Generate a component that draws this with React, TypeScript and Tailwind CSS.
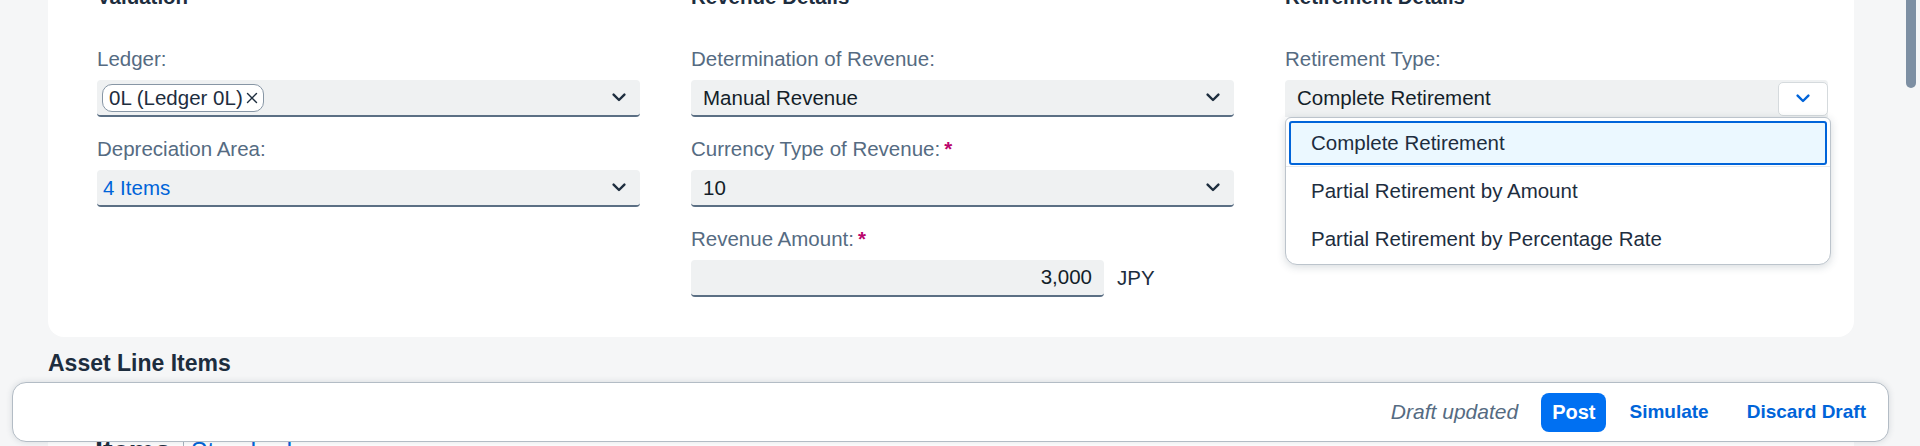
import React from "react";

const Chevron = ({ color = "#1d2d3e", w = 14 }: { color?: string; w?: number }) => (
  <svg width={w} height="9" viewBox="0 0 14 9" fill="none">
    <path d="M1.6 1.6 L7 7 L12.4 1.6" stroke={color} strokeWidth="2.4" strokeLinecap="round" strokeLinejoin="round" />
  </svg>
);

const Close = () => (
  <svg width="12" height="12" viewBox="0 0 12 12" fill="none">
    <path d="M1.5 1.5 L10.5 10.5 M10.5 1.5 L1.5 10.5" stroke="#1d2d3e" strokeWidth="1.4" strokeLinecap="round" />
  </svg>
);

const Label = ({ text, required }: { text: string; required?: boolean }) => (
  <div className="h-[24px] leading-[24px] text-[20.5px] text-[#556b82] flex items-center whitespace-nowrap">
    <span>{text}</span>
    {required && <span className="ml-[4px] font-bold text-[#ba066c]">*</span>}
  </div>
);

const Select = ({ children, pl = "pl-[12px]" }: { children: React.ReactNode; pl?: string }) => (
  <div className={`mt-[9px] h-[37px] bg-[#eff1f2] rounded-[4px] border-b-2 border-[#5b6f84] flex items-center justify-between ${pl} pr-[14px]`}>
    <div className="flex items-center text-[20.5px] text-[#131e29] leading-[35px] whitespace-nowrap">{children}</div>
    <Chevron />
  </div>
);

const Heading = ({ text }: { text: string }) => (
  <div className="h-[24px] leading-[24px] text-[20.5px] font-bold text-[#1d2d3e] whitespace-nowrap">{text}</div>
);

export default function App() {
  return (
    <div className="w-[1920px] h-[446px] overflow-hidden bg-[#f5f6f7] flex font-['Liberation_Sans',Arial,sans-serif]">
      <div className="w-[1902px] relative">
        {/* Form card */}
        <div className="-mt-[40px] ml-[48px] w-[1806px] bg-white rounded-[16px] pt-[25px] pb-[40px] pl-[49px] pr-[26px] flex gap-[51px]">
          {/* Valuation */}
          <div className="w-[543px] flex flex-col">
            <Heading text="Valuation" />
            <div className="mt-[38px] flex flex-col gap-[20px]">
              <div>
                <Label text="Ledger:" />
                <Select pl="pl-[5px]">
                  <span className="inline-flex items-center h-[28px] rounded-[10px] border border-[#8796a5] bg-white pl-[6px] pr-[5px] gap-[3px] text-[20.5px] leading-[26px] text-[#1d2d3e]">
                    0L (Ledger 0L)
                    <Close />
                  </span>
                </Select>
              </div>
              <div>
                <Label text="Depreciation Area:" />
                <Select pl="pl-[6px]">
                  <span className="text-[#0064d9]">4 Items</span>
                </Select>
              </div>
            </div>
          </div>

          {/* Revenue Details */}
          <div className="w-[543px] flex flex-col">
            <Heading text="Revenue Details" />
            <div className="mt-[38px] flex flex-col gap-[20px]">
              <div>
                <Label text="Determination of Revenue:" />
                <Select>Manual Revenue</Select>
              </div>
              <div>
                <Label text="Currency Type of Revenue:" required />
                <Select>10</Select>
              </div>
              <div>
                <Label text="Revenue Amount:" required />
                <div className="mt-[9px] flex items-center">
                  <div className="w-[413px] h-[37px] bg-[#eff1f2] rounded-[4px] border-b-2 border-[#5b6f84] flex items-center justify-end pr-[12px] text-[20.5px] text-[#131e29]">
                    3,000
                  </div>
                  <span className="ml-[13px] text-[20.5px] text-[#1d2d3e]">JPY</span>
                </div>
              </div>
            </div>
          </div>

          {/* Retirement Details */}
          <div className="w-[543px] flex flex-col">
            <Heading text="Retirement Details" />
            <div className="mt-[38px] flex flex-col gap-[20px]">
              <div>
                <Label text="Retirement Type:" />
                <div className="relative mt-[9px]">
                  <div className="h-[37px] bg-[#eff1f2] rounded-t-[4px] flex items-center justify-between pl-[12px]">
                    <span className="text-[20.5px] text-[#131e29] whitespace-nowrap">Complete Retirement</span>
                    <div className="w-[50px] h-[34px] bg-white border border-[#d5dadd] rounded-[5px] flex items-center justify-center">
                      <Chevron color="#0064d9" w={16} />
                    </div>
                  </div>
                  {/* Dropdown popover */}
                  <div className="absolute z-10 left-0 top-[37px] w-[546px] bg-white border border-[#bcc4cc] rounded-t-[6px] rounded-b-[12px] shadow-[0_2px_8px_rgba(34,53,72,0.18)] pb-[1px]">
                    <div className="h-[49px] pt-[3px] px-[3px] border-b border-[#e5e8eb]">
                      <div className="h-[44px] border-2 border-[#0064d9] rounded-[3px] bg-[#ebf8ff] flex items-center pl-[20px] text-[20.5px] text-[#1d2d3e] whitespace-nowrap">
                        Complete Retirement
                      </div>
                    </div>
                    <div className="h-[48px] flex items-center pl-[25px] text-[20.5px] text-[#1d2d3e] whitespace-nowrap">
                      Partial Retirement by Amount
                    </div>
                    <div className="h-[48px] flex items-center pl-[25px] text-[20.5px] text-[#1d2d3e] whitespace-nowrap">
                      Partial Retirement by Percentage Rate
                    </div>
                  </div>
                </div>
              </div>
            </div>
          </div>
        </div>

        {/* Asset Line Items */}
        <div className="ml-[48px] mt-[12px] h-[28px] leading-[28px] text-[23px] font-bold text-[#1d2d3e] whitespace-nowrap">
          Asset Line Items
        </div>
        <div className="ml-[48px] mt-[6px] w-[1806px] h-[120px] bg-white rounded-t-[16px] pt-[51px] pl-[47px] pr-[60px] flex items-start">
          <span className="h-[34px] leading-[34px] text-[29px] font-bold text-[#1d2d3e]">Items</span>
          <span className="ml-[12px] mt-[6px] h-[26px] w-px bg-[#a9b4be]" />
          <span className="ml-[7px] leading-[34px] text-[25px] text-[#0064d9]">Standard</span>
        </div>

        {/* Floating footer */}
        <div className="absolute z-20 left-[12px] top-[382px] w-[1877px] h-[60px] bg-white rounded-[14px] border border-[#b3bcc5] shadow-[0_0_6px_rgba(34,53,72,0.15)] flex items-center justify-end pr-[22px]">
          <span className="italic text-[21px] text-[#556b82] whitespace-nowrap">Draft updated</span>
          <button className="ml-[23px] h-[39px] px-[11px] rounded-[8px] bg-[#0070f2] text-white font-bold text-[20px]">
            Post
          </button>
          <span className="ml-[23px] font-bold text-[19px] text-[#0064d9] whitespace-nowrap">Simulate</span>
          <span className="ml-[38px] font-bold text-[19px] text-[#0064d9] whitespace-nowrap">Discard Draft</span>
        </div>
      </div>

      {/* Scrollbar */}
      <div className="w-[18px] h-full">
        <div className="ml-[4px] -mt-[14px] w-[10px] h-[102px] rounded-full bg-[#7d8fa3]" />
      </div>
    </div>
  );
}
